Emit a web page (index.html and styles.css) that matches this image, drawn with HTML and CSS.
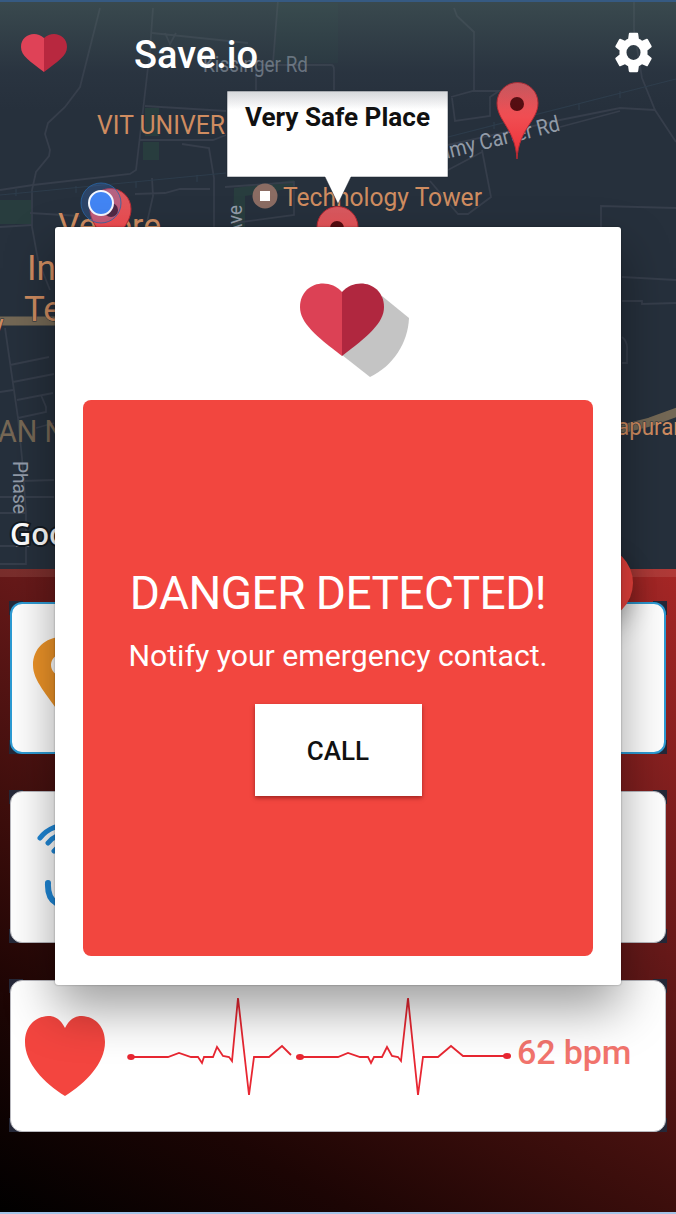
FILE: index.html
```html
<!DOCTYPE html>
<html lang="en">
<head>
<meta charset="utf-8">
<title>Save.io</title>
<link rel="stylesheet" href="styles.css">
</head>
<body>
<div class="screen">
  <section class="map">
    <svg class="map-canvas" viewBox="0 0 676 569" width="676" height="569">
      <defs>
        <linearGradient id="pinFill" x1="0" y1="0" x2="0" y2="1"><stop offset="0" stop-color="#d65a60"/><stop offset=".45" stop-color="#f04d52"/><stop offset="1" stop-color="#ee2f36"/></linearGradient>
        <linearGradient id="calloutFill" x1="0" y1="0" x2="0" y2="1"><stop offset="0" stop-color="#e2e3e6"/><stop offset=".16" stop-color="#fff"/></linearGradient>
      </defs>
      <g class="parks">
        <path d="M145 108h14v28h-14zM143 142h16v18h-16zM0 200h31v24H0zM234 188l60-8v8l-49 8v31h-12z"/>
        <path d="M278 3h60v60h-65z" opacity=".4"/>
      </g>
      <g class="roads">
        <path d="M100 8L80 87 65 107 48 123 45 134 50 150 49 156 36 172 32 190V227L38 260 50 290"/>
        <path d="M153 8L150 50 140 136 136 170 130 174 33 185 0 190"/>
        <path d="M145 106L226 111M140 140H213L226 135M182 144L209 148 214 178V227M152 33L248 43M165 33l5 11 6-11"/>
        <path d="M30 213L80 216M0 227L32 225M135 194L165 193 180 189H210M152 178l1 18-7 31M225 187L294 182v33l-60 8"/>
        <path d="M258 65H331Q334 65 334 70V90M256 65V90M278 0L273 63M454 8L457 16 474 32V90M451 97L473 91H499L490 97V116L455 121 452 98"/>
        <path d="M448 145L560 120 620 108 655 110M560 127L620 111M634 0V30L642 78 655 110 676 142M482 150L491 197 468 214H458L430 181M448 170L482 152"/>
        <path d="M601 229V206L676 208M622 277L676 280M622 301H642V304L676 303M622 337Q628 342 627 350V363H622"/>
        <path d="M5 328L18 418 22 458 26 512V564H0M10 365L49 357M13 382L54 374M0 392L13 390M17 400L53 393M41 395L46 407 46 412 18 418M0 435L14 433M36 428L54 423M22 481L54 480M0 497H54M0 513H26M0 546H25"/>
      </g>
      <path class="rail" d="M0 195L226 173M448 137L676 79M16 189v7M76 186v7M136 181v7M197 175v7M494 122v7M579 103v7M620 91v7"/>
      <path class="highway" d="M0 321H56M618 430L650 422 680 411"/>
      <g class="road-label">
        <text x="203" y="72" font-size="22" textLength="105" lengthAdjust="spacingAndGlyphs" opacity=".7">Kissinger Rd</text>
        <text transform="translate(430 163) rotate(-14)" font-size="22" textLength="135" lengthAdjust="spacingAndGlyphs">immy Carter Rd</text>
        <text transform="translate(242 236) rotate(-90)" font-size="20" textLength="31" lengthAdjust="spacingAndGlyphs">Ave</text>
        <text transform="translate(13 461) rotate(90)" font-size="21" textLength="53" lengthAdjust="spacingAndGlyphs">Phase</text>
        <text transform="translate(16 540) rotate(90)" font-size="19">1</text>
      </g>
      <g class="place-label">
        <text x="97" y="134" font-size="26" textLength="128" lengthAdjust="spacingAndGlyphs">VIT UNIVER</text>
        <text x="283" y="206" font-size="26" textLength="199" lengthAdjust="spacingAndGlyphs">Technology Tower</text>
        <text x="58" y="237" font-size="33" textLength="103" lengthAdjust="spacingAndGlyphs">Vellore</text>
        <text x="27" y="280" font-size="35">In</text>
        <text x="24" y="321" font-size="35">Te</text>
        <text x="-9" y="334" font-size="27">y</text>
        <text x="617" y="435" font-size="23" textLength="76" lengthAdjust="spacingAndGlyphs">apuram</text>
      </g>
      <text class="area-label" x="-2" y="442" font-size="31" textLength="67" lengthAdjust="spacingAndGlyphs">AN N</text>
      <circle cx="265" cy="196" r="12.500" fill="#8b6c63"/>
      <rect x="260" y="191" width="10" height="10" fill="#fff"/>
      <g class="pin">
        <path d="M517 159C515 128 497 121 497 103a20 20 0 0 1 41 0C538 121 519 128 517 159z"/>
        <circle cx="517" cy="104" r="7"/>
        <path d="M337 283C335 252 317 245 317 227a20 20 0 0 1 41 0C358 245 339 252 337 283z"/>
        <circle cx="337" cy="228" r="7"/>
        <path d="M110 265C108 234 90 227 90 209a20.500 20.500 0 0 1 41 0C131 227 112 234 110 265z"/>
        <circle cx="111" cy="210" r="7"/>
      </g>
      <circle cx="101" cy="203" r="20" fill="#4285f4" fill-opacity=".24" stroke="#2867a8" stroke-opacity=".8"/>
      <circle cx="101" cy="203" r="12" fill="#4285f4" stroke="#f5f8ff" stroke-width="2"/>
      <path d="M227 91H448V177H351L338 204 325 177H227z" fill="url(#calloutFill)" stroke="#17202d" stroke-opacity=".5"/>
      <text class="callout-text" x="245" y="126" font-size="26" textLength="185" lengthAdjust="spacingAndGlyphs">Very Safe Place</text>
      <text class="attribution" x="10" y="545" font-size="30" textLength="98" lengthAdjust="spacingAndGlyphs">Google</text>
    </svg>
    <header class="topbar">
      <svg class="brand-icon" viewBox="0 0 46 40" width="46" height="40">
        <path fill="#df4257" d="M23 5C14-3 0 2 0 14c0 9 9 14 23 25z"/>
        <path fill="#b8283f" d="M23 5C32-3 46 2 46 14c0 9-9 14-23 25z"/>
      </svg>
      <h1 class="title">Save.io</h1>
      <svg class="settings" viewBox="2 2 20 20" width="39" height="41" preserveAspectRatio="none">
        <path fill="#fff" d="M19.140 12.940c.04-.3.060-.61.060-.94s-.02-.64-.07-.94l2.030-1.580c.18-.14.230-.41.120-.61l-1.920-3.320c-.12-.22-.37-.29-.59-.22l-2.390.96c-.5-.38-1.030-.7-1.620-.94L14.400 2.810c-.04-.24-.24-.41-.48-.41h-3.840c-.24 0-.43.170-.47.410L9.250 5.350c-.59.240-1.130.570-1.620.940L5.240 5.330c-.22-.08-.47 0-.59.220L2.740 8.870c-.12.210-.08.470.120.610l2.030 1.580C4.840 11.360 4.800 11.690 4.800 12s.02.640.070.940l-2.030 1.580c-.18.140-.23.410-.12.610l1.920 3.320c.12.220.37.290.59.220l2.390-.96c.5.380 1.030.7 1.620.94l.36 2.540c.05.240.24.410.48.410h3.840c.24 0 .44-.17.470-.41l.36-2.540c.59-.24 1.130-.56 1.620-.94l2.390.96c.22.080.47 0 .59-.22l1.920-3.320c.12-.22.070-.47-.12-.61zM12 15.600A3.600 3.600 0 1 1 12 8.400a3.600 3.600 0 0 1 0 7.200z"/>
      </svg>
    </header>
  </section>

  <main class="sheet">
    <div class="slot"><div class="card card-active">
      <svg class="place-icon" viewBox="0 0 60 82" width="60" height="82"><path fill="#ee9428" fill-rule="evenodd" d="M29 0C12 0 0 12 0 28c0 16 14 29 29 52 15-23 29-36 29-52C58 12 46 0 29 0zm0 17a11 11 0 1 1 0 22 11 11 0 0 1 0-22z"/></svg>
    </div></div>
    <div class="slot"><div class="card">
      <svg class="signal-icon" viewBox="0 0 70 90" width="70" height="90" fill="none" stroke="#1f88d8" stroke-width="5" stroke-linecap="round"><path d="M3 18Q14 3 42 4M11 23Q20 11 40 14M17 31Q25 21 36 23"/><path stroke-width="6" d="M11 63C10 83 24 90 40 82"/></svg>
    </div></div>
    <div class="slot"><div class="card card-heart">
      <svg class="heart-icon" viewBox="0 0 80 80" width="80" height="80"><path fill="#f3453f" d="M40 12C36 4 31 0 23 0 8 1 0 12 0 26 0 47 19 67 40 80 61 67 80 47 80 26 80 12 72 1 57 0 49 0 44 4 40 12z"/></svg>
      <svg class="ecg" viewBox="127 990 385 112" width="385" height="112" fill="none" stroke="#e82732" stroke-width="1.800">
        <path d="M131 1057H168L179 1053 191 1057H198L202 1063 204 1057H213L217 1047 223 1056 229 1057 232 1061 238 998 249 1095 254 1057H269L282 1046 291 1055"/>
        <path d="M300 1057H338L348 1053 360 1057H368L371 1063 374 1057H382L387 1047 392 1056 398 1057 401 1061 408 998 418 1095 423 1057H438L451 1046 463 1056H507"/>
        <g fill="#e82732" stroke="none"><ellipse cx="131" cy="1057" rx="3.800" ry="3"/><ellipse cx="300" cy="1057" rx="4" ry="3"/><ellipse cx="507" cy="1056" rx="4" ry="3"/></g>
      </svg>
      <span class="bpm">62 bpm</span>
    </div></div>
  </main>
  <div class="fab"></div>

  <div class="dialog" role="dialog">
    <svg class="logo" viewBox="295 275 120 110" width="120" height="110">
      <path fill="#c4c4c4" d="M382 296L409 318C408 343 393 366 370 377L342 355z"/>
      <path fill="#dc4155" d="M342 292C328 276 300 283 300 307 300 323 316 336 342 356z"/>
      <path fill="#b0273f" d="M342 292C356 276 384 283 384 307 384 323 368 336 342 356z"/>
    </svg>
    <div class="alert">
      <h2 class="alert-title">DANGER DETECTED!</h2>
      <p class="alert-text">Notify your emergency contact.</p>
      <button class="call">CALL</button>
    </div>
  </div>
</div>
</body>
</html>
```
FILE: styles.css
```css
* { box-sizing: border-box; margin: 0; }
body { font-family: Roboto, sans-serif; }
.screen {
  position: relative;
  display: flex;
  flex-direction: column;
  width: 676px;
  height: 1214px;
  overflow: hidden;
  background: #000;
}

.map { position: relative; height: 569px; background: #26303c; }
.map-canvas { position: absolute; inset: 0; }
.parks { fill: #283d3e; }
.roads { fill: none; stroke: #363e4b; stroke-width: 1.800; }
.rail { fill: none; stroke: #2d3c4b; stroke-width: 1.200; }
.highway { fill: none; stroke: #746855; stroke-width: 9; }
.road-label { fill: #929ba8; }
.place-label { fill: #cf8c60; stroke: #26303c; stroke-width: 1; paint-order: stroke; }
.area-label { fill: #776855; }
.pin path { fill: url(#pinFill); stroke: #b72a33; stroke-width: 1; }
.pin circle { fill: #560c10; }
.callout-text { fill: #111; font-weight: 700; }
.attribution { fill: #fff; stroke: #141b22; stroke-width: 4; paint-order: stroke; font-weight: 600; font-family: "Open Sans", sans-serif; }

.topbar {
  position: relative;
  display: flex;
  align-items: center;
  height: 110px;
  padding: 0 23px 7px 21px;
  border-top: 2px solid #365a82;
  background: linear-gradient(rgba(84, 108, 103, .42), rgba(60, 72, 84, .16) 65%, rgba(60, 72, 84, 0));
}
.title {
  margin-left: 67px;
  padding-top: 5px;
  color: #fff;
  font-size: 38px;
  font-weight: 500;
  line-height: 44px;
}
.settings { margin-left: auto; }

.sheet {
  display: flex;
  flex-direction: column;
  gap: 36px;
  height: 645px;
  padding: 24px 9px 0;
  border-top: 8px solid rgba(255, 190, 180, .13);
  border-bottom: 2px solid #a3c4e8;
  background: linear-gradient(210deg, #a72726, #661919 38%, #3c0e0c 62%, #1c0504 80%, #000) border-box;
}
.slot {
  height: 153px;
  padding: 1px 0 0 1px;
  background:
    linear-gradient(#252838, #252838) 0 0 / 14px 14px no-repeat,
    linear-gradient(#252838, #252838) 100% 0 / 14px 14px no-repeat,
    linear-gradient(#252838, #252838) 0 100% / 14px 14px no-repeat,
    linear-gradient(#252838, #252838) 100% 100% / 14px 14px no-repeat;
}
.card {
  display: flex;
  align-items: center;
  width: 656px;
  height: 152px;
  border-radius: 12px;
  background: #fff;
  border: 1px solid #b9b9bf;
}
.card-active { border: 2px solid #2d9bd4; }
.place-icon { margin-left: 21px; }
.signal-icon { margin: -4px 0 0 26px; }
.card-heart { padding-left: 14px; }
.ecg { margin: -20px 0 0 22px; }
.bpm {
  margin: -8px 0 0 5px;
  color: #f2746d;
  font-size: 34px;
  font-weight: 500;
  letter-spacing: -.1px;
  white-space: nowrap;
}
.fab {
  position: absolute;
  left: 559px;
  top: 546px;
  width: 74px;
  height: 74px;
  border-radius: 50%;
  background: #e5403b;
  box-shadow: 0 10px 24px rgba(0, 0, 0, .3);
}

.dialog {
  position: absolute;
  left: 55px;
  top: 227px;
  display: flex;
  flex-direction: column;
  width: 566px;
  height: 758px;
  padding: 48px 28px 29px;
  border-radius: 3px;
  background: #fff;
  box-shadow: 0 0 2px rgba(0, 0, 0, .4), 0 24px 50px rgba(0, 0, 0, .38);
}
.logo { margin-left: 212px; }
.alert {
  display: flex;
  flex-direction: column;
  align-items: center;
  height: 556px;
  margin-top: 15px;
  padding-top: 166px;
  border-radius: 8px;
  background: #f2463f;
  color: #fff;
}
.alert-title { font-size: 46px; font-weight: 400; letter-spacing: -.55px; line-height: 54px; white-space: nowrap; }
.alert-text { margin-top: 18px; font-size: 30.200px; line-height: 36px; white-space: nowrap; }
.call {
  width: 167px;
  height: 92px;
  margin-top: 30px;
  padding-top: 3px;
  border: 0;
  background: #fff;
  color: #111;
  font: 500 26px Roboto, sans-serif;
  box-shadow: 0 2px 4px rgba(80, 0, 0, .5);
}
```
